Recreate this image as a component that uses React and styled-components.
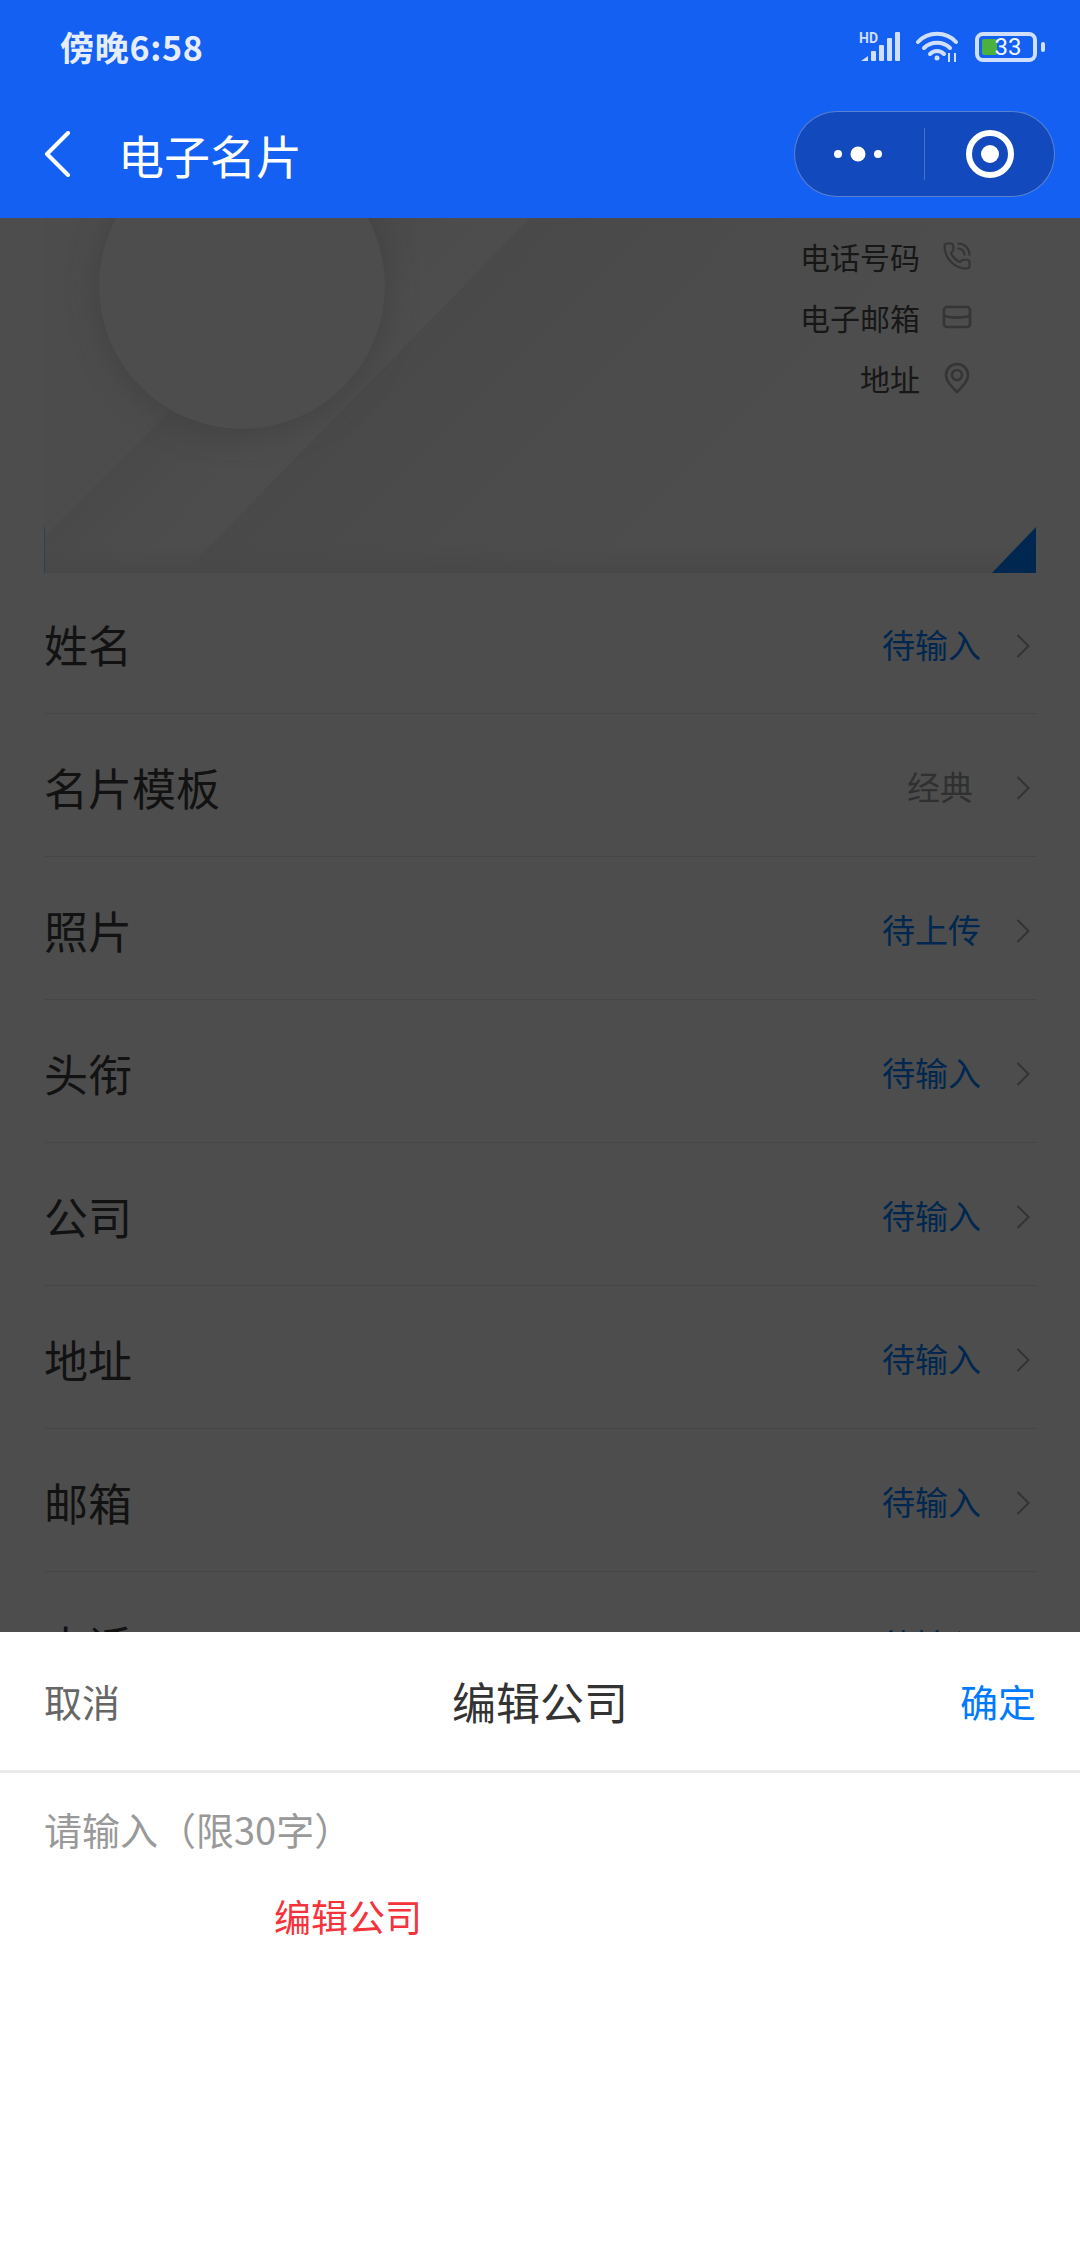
import React from 'react';
import styled, { createGlobalStyle } from 'styled-components';
import { PhoneCall } from 'lucide-react';

const Global = createGlobalStyle`
  html, body { margin: 0; padding: 0; background: #4d4d4d; }
  * { box-sizing: border-box; }
  body { font-family: "Noto Sans CJK SC", "Noto Sans", sans-serif; }
`;

const Page = styled.div`
  width: 1080px;
  height: 2248px;
  display: flex;
  flex-direction: column;
  overflow: hidden;
  background: #4d4d4d;
`;

const Header = styled.header`
  flex: none;
  height: 218px;
  background: #1460f2;
  display: flex;
  flex-direction: column;
`;

const StatusBar = styled.div`
  height: 94px;
  padding: 0 36px 0 60px;
  display: flex;
  align-items: center;
  justify-content: space-between;
`;

const Clock = styled.span`
  color: #e6eefd;
  font-size: 34px;
  font-weight: 700;
  letter-spacing: 0.7px;
  line-height: 1;
`;

const StatusIcons = styled.div`
  display: flex;
  align-items: center;
  gap: 15px;
`;

const Battery = styled.div`
  position: relative;
  width: 62px;
  height: 30px;
  border: 4px solid #cfdffc;
  border-radius: 8px;
  margin-right: 7px;
  display: flex;
  align-items: center;
  justify-content: center;
  color: #f2f6ff;
  font-family: "Roboto", sans-serif;
  font-size: 24px;
  line-height: 1;
  &::before {
    content: "";
    position: absolute;
    left: 3px;
    top: 3px;
    width: 15px;
    height: 16px;
    border-radius: 2px;
    background: #4cb13c;
  }
  &::after {
    content: "";
    position: absolute;
    right: -12px;
    top: 6px;
    width: 4px;
    height: 10px;
    border-radius: 2px;
    background: #cfdffc;
  }
`;

const BatteryValue = styled.span`
  position: relative;
  margin-left: 4px;
`;

const NavBar = styled.div`
  flex: 1;
  padding: 0 25px 4px 44px;
  display: flex;
  align-items: center;
`;

const NavTitle = styled.h1`
  margin: 0 0 0 48px;
  flex: 1;
  color: #fff;
  font-size: 46px;
  font-weight: 400;
  line-height: 1;
`;

const Capsule = styled.div`
  width: 261px;
  height: 86px;
  border-radius: 43px;
  border: 1px solid rgba(255, 255, 255, 0.3);
  background: #1249bd;
  display: flex;
  align-items: center;
`;

const CapsuleHalf = styled.div`
  flex: 1;
  display: flex;
  align-items: center;
  justify-content: center;
`;

const CapsuleDots = styled.svg`
  margin-right: 4px;
`;

const CapsuleDivider = styled.div`
  width: 1px;
  height: 52px;
  background: rgba(255, 255, 255, 0.22);
`;

const Main = styled.main`
  flex: 1;
  min-height: 0;
  overflow: hidden;
`;

const Card = styled.section`
  position: relative;
  height: 355px;
  margin: 0 44px;
  padding: 7px 64px 0 0;
  overflow: hidden;
`;

const CardArt = styled.svg`
  position: absolute;
  inset: 0;
`;

const Contacts = styled.ul`
  position: relative;
  margin: 0;
  padding: 0;
  list-style: none;
  display: flex;
  flex-direction: column;
  align-items: flex-end;
`;

const Contact = styled.li`
  height: 61px;
  display: flex;
  align-items: center;
  gap: 22px;
  color: #171717;
  font-size: 30px;
  line-height: 1;
`;

const ContactIcon = styled.span`
  width: 30px;
  height: 30px;
  display: flex;
  align-items: center;
  justify-content: center;
  color: #353535;
`;

const List = styled.ul`
  margin: 0;
  padding: 0 43px 0 44px;
  list-style: none;
`;

const Row = styled.li`
  height: 143px;
  padding-top: 3px;
  display: flex;
  align-items: center;
  border-bottom: 1px solid #464646;
  &:first-child { height: 141px; padding-top: 2px; }
`;

const RowLabel = styled.span`
  flex: 1;
  color: #121212;
  font-size: 44px;
  line-height: 1;
`;

const RowValue = styled.span`
  color: ${p => (p.$pending ? '#00274f' : '#303030')};
  font-size: 33px;
  line-height: 1;
  margin-right: ${p => (p.$pending ? '35px' : '43px')};
`;

const Chevron = styled.svg`
  flex: none;
  width: 14px;
  height: 24px;
  margin: 3px 7px 0 0;
`;

const Sheet = styled.section`
  flex: none;
  height: 616px;
  background: #fff;
`;

const SheetHead = styled.div`
  height: 141px;
  padding: 0 44px;
  border-bottom: 3px solid #ebebeb;
  display: grid;
  grid-template-columns: 1fr auto 1fr;
  align-items: center;
`;

const SheetAction = styled.span`
  font-size: 38px;
  line-height: 1;
  color: ${p => (p.$primary ? '#007aff' : '#666666')};
  text-align: ${p => (p.$primary ? 'right' : 'left')};
`;

const SheetTitle = styled.h2`
  margin: 0;
  font-size: 44px;
  font-weight: 400;
  line-height: 1;
  color: #333;
`;

const Field = styled.div`
  padding: 31px 44px 0;
  display: flex;
  flex-direction: column;
`;

const Placeholder = styled.span`
  color: #999;
  font-size: 38px;
  line-height: 50px;
`;

const Notice = styled.span`
  margin: 37px 0 0 230px;
  color: #f5333a;
  font-size: 37px;
  line-height: 50px;
`;

const Signal = () => (
  <svg width="42" height="32" viewBox="0 0 42 32">
    <text x="0" y="12" fontFamily="Roboto, sans-serif" fontWeight="700" fontSize="14" fill="#cfdffc">HD</text>
    <path d="M2 30 L9 25 V30 Z" fill="#cfdffc" />
    <rect x="12" y="20" width="5" height="10" rx="1" fill="#cfdffc" />
    <rect x="20" y="14" width="5" height="16" rx="1" fill="#cfdffc" />
    <rect x="28" y="7" width="5" height="23" rx="1" fill="#cfdffc" />
    <rect x="36" y="1" width="5" height="29" rx="1" fill="#cfdffc" />
  </svg>
);

const Wifi = () => (
  <svg width="44" height="32" viewBox="0 0 44 32" fill="none" stroke="#cfdffc" strokeWidth="4" strokeLinecap="round">
    <path d="M2 11 C12 0 30 0 40 11" />
    <path d="M8 17 C15 10 27 10 34 17" />
    <path d="M14 23 C18 19 24 19 28 23" />
    <circle cx="21" cy="27" r="2.5" fill="#cfdffc" stroke="none" />
    <path d="M33 22 V31 M39 22 V31" strokeWidth="2" strokeLinecap="butt" />
  </svg>
);

const MailIcon = () => (
  <svg width="30" height="24" viewBox="0 0 30 24" fill="none" stroke="currentColor" strokeWidth="2.6">
    <rect x="2" y="2" width="26" height="20" rx="3" />
    <path d="M2 11 C10 13 20 13 28 11" />
  </svg>
);

const PinIcon = () => (
  <svg width="28" height="32" viewBox="0 0 28 32" fill="none" stroke="currentColor" strokeWidth="2.6">
    <path d="M14 30 C8 24 3 19 3 13 A11 11 0 0 1 25 13 C25 19 20 24 14 30 Z" strokeLinejoin="round" />
    <circle cx="14" cy="13" r="5" />
  </svg>
);

const CardDrawing = () => (
  <CardArt width="992" height="355" viewBox="0 0 992 355">
    <defs>
      <filter id="soft" x="-30%" y="-30%" width="160%" height="160%">
        <feGaussianBlur stdDeviation="13" />
      </filter>
      <linearGradient id="bandRight" gradientUnits="userSpaceOnUse" x1="310" y1="180" x2="520" y2="390">
        <stop offset="0" stopColor="#484948" />
        <stop offset="1" stopColor="#4d4d4d" />
      </linearGradient>
      <linearGradient id="bandMiddle" gradientUnits="userSpaceOnUse" x1="150" y1="170" x2="235" y2="255">
        <stop offset="0" stopColor="#484948" />
        <stop offset="0.7" stopColor="#4d4d4d" />
      </linearGradient>
      <linearGradient id="floor" x1="0" y1="0" x2="0" y2="1">
        <stop offset="0" stopColor="#484848" stopOpacity="0" />
        <stop offset="1" stopColor="#484848" stopOpacity="1" />
      </linearGradient>
    </defs>
    <rect width="992" height="355" fill="#4c4c4c" />
    <path d="M486 0 H992 V355 H139 Z" fill="url(#bandRight)" />
    <path d="M319 0 H486 L139 355 H0 V319 Z" fill="url(#bandMiddle)" />
    <rect y="325" width="992" height="30" fill="url(#floor)" />
    <circle cx="198" cy="72" r="150" fill="#3e3e3e" opacity="0.5" filter="url(#soft)" />
    <circle cx="198" cy="68" r="143" fill="#4d4d4d" />
    <path d="M0.5 309 V355" stroke="#2c3f55" strokeWidth="1" />
    <path d="M992 309 V355 H948 Z" fill="#00274f" />
  </CardArt>
);

const rows = [
  ['姓名', '待输入', true],
  ['名片模板', '经典', false],
  ['照片', '待上传', true],
  ['头衔', '待输入', true],
  ['公司', '待输入', true],
  ['地址', '待输入', true],
  ['邮箱', '待输入', true],
  ['电话', '待输入', true],
];

export default function App() {
  return (
    <Page>
      <Global />
      <Header>
        <StatusBar>
          <Clock>傍晚6:58</Clock>
          <StatusIcons>
            <Signal />
            <Wifi />
            <Battery><BatteryValue>33</BatteryValue></Battery>
          </StatusIcons>
        </StatusBar>
        <NavBar>
          <svg width="26" height="46" viewBox="0 0 26 46" fill="none" stroke="#fff" strokeWidth="4" strokeLinecap="round" strokeLinejoin="round">
            <path d="M24 2 L3 23 L24 44" />
          </svg>
          <NavTitle>电子名片</NavTitle>
          <Capsule>
            <CapsuleHalf>
              <CapsuleDots width="52" height="16" viewBox="0 0 52 16" fill="#fff">
                <circle cx="6" cy="8" r="4" />
                <circle cx="26" cy="8" r="7.5" />
                <circle cx="46" cy="8" r="4" />
              </CapsuleDots>
            </CapsuleHalf>
            <CapsuleDivider />
            <CapsuleHalf>
              <svg width="50" height="50" viewBox="0 0 50 50">
                <circle cx="25" cy="25" r="21" fill="none" stroke="#fff" strokeWidth="6" />
                <circle cx="25" cy="25" r="9" fill="#fff" />
              </svg>
            </CapsuleHalf>
          </Capsule>
        </NavBar>
      </Header>
      <Main>
        <Card>
          <CardDrawing />
          <Contacts>
            <Contact>电话号码<ContactIcon><PhoneCall size={32} strokeWidth={1.7} /></ContactIcon></Contact>
            <Contact>电子邮箱<ContactIcon><MailIcon /></ContactIcon></Contact>
            <Contact>地址<ContactIcon><PinIcon /></ContactIcon></Contact>
          </Contacts>
        </Card>
        <List>
          {rows.map(([label, value, pending]) => (
            <Row key={label}>
              <RowLabel>{label}</RowLabel>
              <RowValue $pending={pending}>{value}</RowValue>
              <Chevron viewBox="0 0 14 24" fill="none" stroke="#333" strokeWidth="2">
                <path d="M1.5 1 L12.5 12 L1.5 23" />
              </Chevron>
            </Row>
          ))}
        </List>
      </Main>
      <Sheet>
        <SheetHead>
          <SheetAction>取消</SheetAction>
          <SheetTitle>编辑公司</SheetTitle>
          <SheetAction $primary>确定</SheetAction>
        </SheetHead>
        <Field>
          <Placeholder>请输入（限30字）</Placeholder>
          <Notice>编辑公司</Notice>
        </Field>
      </Sheet>
    </Page>
  );
}
